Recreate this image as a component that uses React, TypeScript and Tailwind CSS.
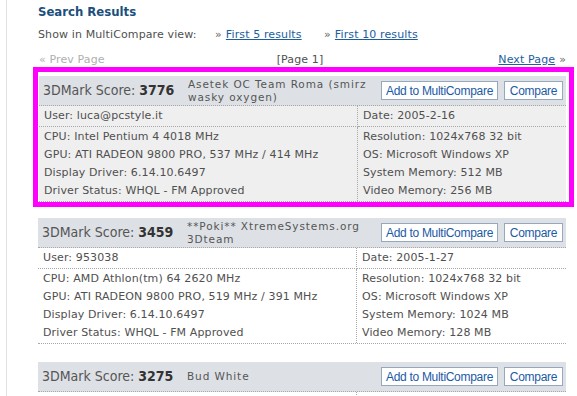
const results = [
  {
    score: "3776",
    team: "Asetek OC Team Roma (smirz wasky oxygen)",
    user: "luca@pcstyle.it",
    date: "2005-2-16",
    cpu: "Intel Pentium 4 4018 MHz",
    gpu: "ATI RADEON 9800 PRO, 537 MHz / 414 MHz",
    driver: "6.14.10.6497",
    status: "WHQL - FM Approved",
    resolution: "1024x768 32 bit",
    os: "Microsoft Windows XP",
    sysMem: "512 MB",
    vidMem: "256 MB",
  },
  {
    score: "3459",
    team: "**Poki** XtremeSystems.org 3Dteam",
    user: "953038",
    date: "2005-1-27",
    cpu: "AMD Athlon(tm) 64 2620 MHz",
    gpu: "ATI RADEON 9800 PRO, 519 MHz / 391 MHz",
    driver: "6.14.10.6497",
    status: "WHQL - FM Approved",
    resolution: "1024x768 32 bit",
    os: "Microsoft Windows XP",
    sysMem: "1024 MB",
    vidMem: "128 MB",
  },
  {
    score: "3275",
    team: "Bud White",
    user: "",
    date: "",
    cpu: "",
    gpu: "",
    driver: "",
    status: "",
    resolution: "",
    os: "",
    sysMem: "",
    vidMem: "",
  },
];

type Result = (typeof results)[number];

function ResultCard({ r, shaded }: { r: Result; shaded?: boolean }) {
  const body = shaded ? "bg-[#efefef]" : "bg-white";
  return (
    <div className="border-b border-dotted border-[#a8a8a8]">
      {/* header: score, team, actions */}
      <div className="flex h-[30px] items-center border-b border-dotted border-[#a8a8a8] bg-[#dde1e5] pl-[4px] pr-[3px]">
        <div className="w-[145px] shrink-0 font-['DejaVu_Sans_Condensed',sans-serif] text-[14px] tracking-normal text-[#555]">
          3DMark Score: <b className="text-[#333]">{r.score}</b>
        </div>
        <div className="w-[190px] text-[10.5px] leading-[13px] tracking-[0.9px] text-[#555]">{r.team}</div>
        <div className="ml-auto flex gap-[6px] font-['Liberation_Sans',sans-serif] text-[12px] tracking-[-0.3px] text-[#1a5aa6]">
          <button className="h-[19px] w-[117px] border border-[#95a8bd] bg-white">Add to MultiCompare</button>
          <button className="h-[19px] w-[59px] border border-[#95a8bd] bg-white">Compare</button>
        </div>
      </div>

      <div className={`grid grid-cols-[319px_1fr] ${body}`}>
        <div className="flex h-[21px] items-center border-b border-r border-dotted border-[#a8a8a8] pl-[5px]">
          User: {r.user}
        </div>
        <div className="flex h-[21px] items-center border-b border-dotted border-[#a8a8a8] pl-[5px]">
          Date: {r.date}
        </div>
        <div className="border-r border-dotted border-[#a8a8a8] pb-px pt-[1px] pl-[5px] leading-[18px]">
          <div>CPU: {r.cpu}</div>
          <div>GPU: {r.gpu}</div>
          <div>Display Driver: {r.driver}</div>
          <div>Driver Status: {r.status}</div>
        </div>
        <div className="pb-px pt-[1px] pl-[5px] leading-[18px]">
          <div>Resolution: {r.resolution}</div>
          <div>OS: {r.os}</div>
          <div>System Memory: {r.sysMem}</div>
          <div>Video Memory: {r.vidMem}</div>
        </div>
      </div>
    </div>
  );
}

export default function App() {
  return (
    <div className="h-[396px] w-[577px] overflow-hidden bg-white font-['DejaVu_Sans',sans-serif] text-[11px] tracking-[0.12px] text-[#505050]">
      <div className="ml-[6px] h-full border-l border-[#e3e3e3] pl-[31px] pr-[11px]">
        <h1 className="h-[24px] font-['DejaVu_Sans_Condensed',sans-serif] text-[13px] font-bold leading-[24px] tracking-normal text-[#1c4f7c]">
          Search Results
        </h1>

        <div className="flex h-[22px] items-center">
          <span className="w-[177px]">Show in MultiCompare view:</span>
          <span className="w-[109px]">
            <span className="mr-[4px] text-[#666]">»</span>
            <a className="text-[#1b5e9e] underline">First 5 results</a>
          </span>
          <span>
            <span className="mr-[4px] text-[#666]">»</span>
            <a className="text-[#1b5e9e] underline">First 10 results</a>
          </span>
        </div>

        <div className="grid h-[21px] grid-cols-3 pt-[6px] leading-[15px]">
          <span className="pl-px text-[#b0b0b0]">« Prev Page</span>
          <span className="pr-[4px] text-center">[Page 1]</span>
          <span className="text-right">
            <a className="text-[#1b5e9e] underline">Next Page</a>
            <span className="ml-[4px] text-[#666]">»</span>
          </span>
        </div>

        {/* highlighted result */}
        <div className="-ml-[5px] -mr-[8px] border-[5px] border-[#ff00ff] pl-px pr-[3px] pt-[4px]">
          <ResultCard r={results[0]} shaded />
        </div>

        <div className="mt-[11px]">
          <ResultCard r={results[1]} />
        </div>
        <div className="mt-[18px]">
          <ResultCard r={results[2]} />
        </div>
      </div>
    </div>
  );
}
